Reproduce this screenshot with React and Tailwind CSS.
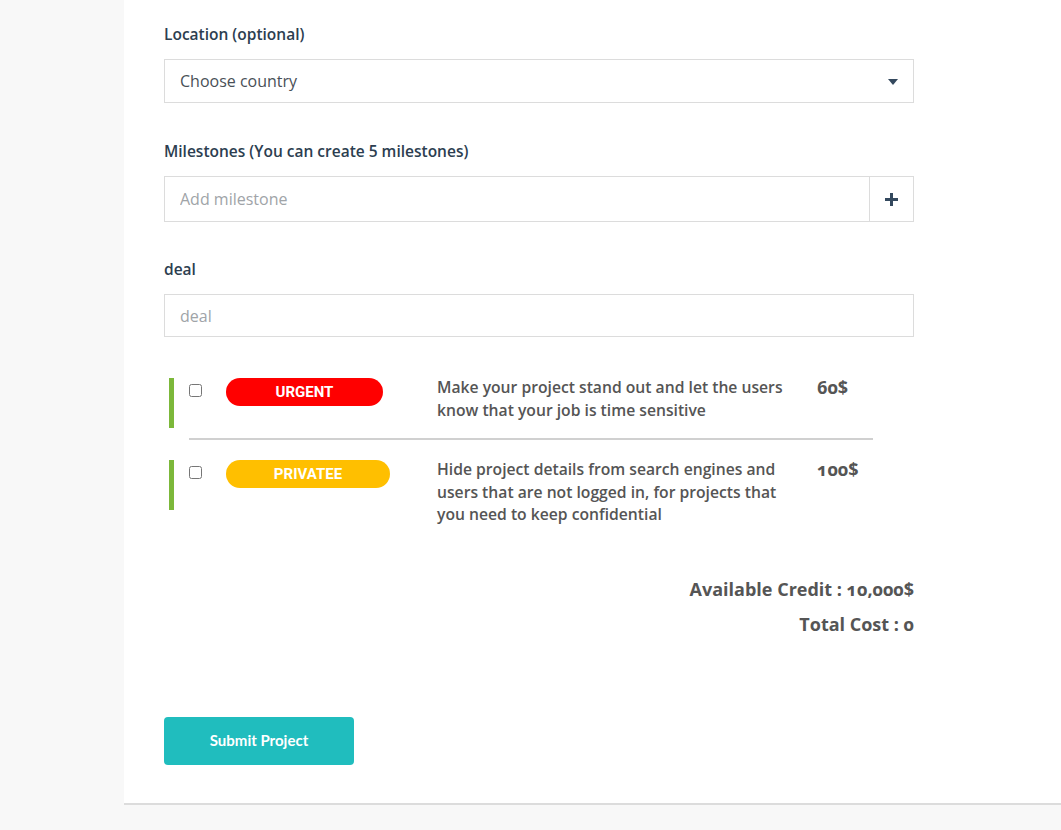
function OptionRow({ badgeColor, label, text, price, badgeWidth }) {
  return (
    <div className="flex items-start ml-[5px]">
      <div className="w-[5px] h-[50px] bg-[#7cb83a]" />
      <input type="checkbox" className="m-0 mt-[6px] ml-[15px] w-[13px] h-[13px]" />
      <span
        className={`ml-[24px] h-[28px] rounded-full flex items-center justify-center text-white text-[15px] font-bold ${badgeColor}`}
        style={{ width: badgeWidth, fontFamily: "Roboto, sans-serif" }}
      >
        {label}
      </span>
      <p
        className="text-[15.7px] font-semibold text-[#555] leading-[22.5px] w-[358px] -mt-[2px]"
        style={{ marginLeft: 437 - 226 - badgeWidth }}
      >
        {text}
      </p>
      <span className="ml-[22px] text-[18px] font-bold text-[#555] leading-[22px] -mt-[2px] oldstyle-nums">{price}</span>
    </div>
  );
}

export default function App() {
  return (
    <div className="min-h-[830px] bg-[#f8f8f8] font-['Open_Sans',sans-serif]">
      <div className="ml-[124px] bg-white border-b-2 border-[#dcdcdc] pl-[40px] pr-[147px] pt-[23px] pb-[38px]">
        <div className="w-[750px]">
          {/* Location */}
          <label className="block text-[15.5px] font-semibold text-[#2c3e50] leading-[22px]">Location (optional)</label>
          <div className="mt-[14px] h-[44px] border border-[#dcdcdc] flex items-center justify-between pl-[15px] pr-[15px]">
            <span className="text-[16px] text-[#495057]">Choose country</span>
            <svg width="10" height="6" viewBox="0 0 10 6" className="mt-[1px]">
              <path d="M0 0h10L5 6z" fill="#34495e" />
            </svg>
          </div>

          {/* Milestones */}
          <label className="block mt-[37px] text-[15.5px] font-semibold text-[#2c3e50] leading-[22px]">
            Milestones (You can create 5 milestones)
          </label>
          <div className="mt-[14px] h-[46px] border border-[#dcdcdc] flex">
            <input
              className="flex-1 pl-[15px] text-[16px] text-[#495057] placeholder:text-[#a0a4a8] outline-none"
              placeholder="Add milestone"
            />
            <button className="w-[44px] border-l border-[#dcdcdc] flex items-center justify-center">
              <svg width="13" height="13" viewBox="0 0 13 13">
                <path d="M5 0h3v5h5v3H8v5H5V8H0V5h5z" fill="#34495e" />
              </svg>
            </button>
          </div>

          {/* deal */}
          <label className="block mt-[36px] text-[15.5px] font-semibold text-[#2c3e50] leading-[22px]">deal</label>
          <div className="mt-[14px] h-[43px] border border-[#dcdcdc] flex">
            <input
              className="flex-1 pl-[15px] text-[16px] text-[#495057] placeholder:text-[#a0a4a8] outline-none"
              placeholder="deal"
            />
          </div>

          {/* Upgrades */}
          <div className="mt-[41px]">
            <OptionRow
              badgeColor="bg-[#ff0000]"
              label="URGENT"
              badgeWidth={157}
              text="Make your project stand out and let the users know that your job is time sensitive"
              price="60$"
            />
            <div className="ml-[25px] w-[684px] h-[2px] bg-[#d0d0d0] mt-[10px] mb-[20px]" />
            <OptionRow
              badgeColor="bg-[#ffbf00]"
              label="PRIVATEE"
              badgeWidth={164}
              text="Hide project details from search engines and users that are not logged in, for projects that you need to keep confidential"
              price="100$"
            />
          </div>

          {/* Totals */}
          <div className="mt-[51px] text-right text-[18px] font-bold text-[#555] leading-[24px] oldstyle-nums">
            <p>Available Credit : 10,000$</p>
            <p className="mt-[11px]">Total Cost : 0</p>
          </div>

          <button className="mt-[81px] w-[190px] h-[48px] rounded-[4px] bg-[#20bdbe] text-white text-[15px] font-bold font-['Lato',sans-serif]">
            Submit Project
          </button>
        </div>
      </div>
    </div>
  );
}
